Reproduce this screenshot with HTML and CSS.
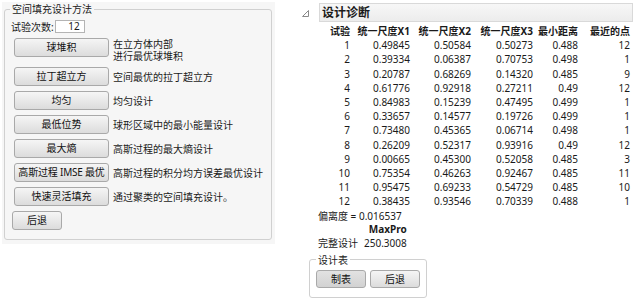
FILE: index.html
```html
<!DOCTYPE html>
<html lang="zh-CN">
<head>
    <meta charset="UTF-8">
    <title>空间填充设计</title>
    <link rel="stylesheet" href="styles.css">
</head>
<body>
    <div class="page">
        <!-- 左侧: 设计方法 -->
        <div class="left-pane">
            <fieldset class="group method-group">
                <legend>空间填充设计方法</legend>
                <div class="runs-row">
                    <span>试验次数:</span>
                    <span class="num-box">12</span>
                </div>
                <div class="method-row tall">
                    <button class="btn method-btn">球堆积</button>
                    <div class="desc">在立方体内部<br>进行最优球堆积</div>
                </div>
                <div class="method-row">
                    <button class="btn method-btn">拉丁超立方</button>
                    <div class="desc">空间最优的拉丁超立方</div>
                </div>
                <div class="method-row">
                    <button class="btn method-btn">均匀</button>
                    <div class="desc">均匀设计</div>
                </div>
                <div class="method-row">
                    <button class="btn method-btn">最低位势</button>
                    <div class="desc">球形区域中的最小能量设计</div>
                </div>
                <div class="method-row">
                    <button class="btn method-btn">最大熵</button>
                    <div class="desc">高斯过程的最大熵设计</div>
                </div>
                <div class="method-row">
                    <button class="btn method-btn tight">高斯过程 IMSE 最优</button>
                    <div class="desc">高斯过程的积分均方误差最优设计</div>
                </div>
                <div class="method-row">
                    <button class="btn method-btn">快速灵活填充</button>
                    <div class="desc">通过聚类的空间填充设计。</div>
                </div>
                <button class="btn back-btn">后退</button>
            </fieldset>
        </div>

        <!-- 右侧: 设计诊断 -->
        <div class="right-pane">
            <div class="outline">
                <svg class="disclosure" width="9" height="9" viewBox="0 0 9 9">
                    <path d="M7.5 1.5 L7.5 7.5 L1.5 7.5 Z" fill="none" stroke="#8a8a8a" stroke-width="1"/>
                </svg>
                <div class="outline-title">设计诊断</div>
            </div>
            <table class="diag">
                <thead>
                    <tr>
                        <th>试验</th>
                        <th>统一尺度X1</th>
                        <th>统一尺度X2</th>
                        <th>统一尺度X3</th>
                        <th>最小距离</th>
                        <th>最近的点</th>
                    </tr>
                </thead>
                <tbody id="diag-rows"></tbody>
            </table>
            <div class="discrepancy">偏离度 = 0.016537</div>
            <table class="maxpro">
                <tr><td></td><th>MaxPro</th></tr>
                <tr><td class="label">完整设计</td><td>250.3008</td></tr>
            </table>
            <fieldset class="group table-group">
                <legend>设计表</legend>
                <button class="btn small-btn pressed">制表</button>
                <button class="btn small-btn">后退</button>
            </fieldset>
        </div>
    </div>

    <script>
        // 诊断数据: 试验, X1, X2, X3, 最小距离, 最近的点
        const rows = [
            [1, '0.49845', '0.50584', '0.50273', '0.488', 12],
            [2, '0.39334', '0.06387', '0.70753', '0.498', 1],
            [3, '0.20787', '0.68269', '0.14320', '0.485', 9],
            [4, '0.61776', '0.92918', '0.27211', '0.49', 12],
            [5, '0.84983', '0.15239', '0.47495', '0.499', 1],
            [6, '0.33657', '0.14577', '0.19726', '0.499', 1],
            [7, '0.73480', '0.45365', '0.06714', '0.498', 1],
            [8, '0.26209', '0.52317', '0.93916', '0.49', 12],
            [9, '0.00665', '0.45300', '0.52058', '0.485', 3],
            [10, '0.75354', '0.46263', '0.92467', '0.485', 11],
            [11, '0.95475', '0.69233', '0.54729', '0.485', 10],
            [12, '0.38435', '0.93546', '0.70339', '0.488', 1]
        ];

        document.getElementById('diag-rows').innerHTML = rows.map(r => `
            <tr>${r.map(v => `<td>${v}</td>`).join('')}</tr>
        `).join('');
    </script>
</body>
</html>
```

FILE: styles.css
```css
body {
    margin: 0;
    background-color: #fff;
    color: #1a1a1a;
    font-family: "Noto Sans", "Noto Sans CJK SC", sans-serif;
    font-size: 10px;
}
.page {
    display: flex;
    align-items: flex-start;
    width: 636px;
    height: 306px;
}

/* left pane */
.left-pane {
    width: 273px;
    height: 242px;
    margin: 2px 0 0 2px;
    background-color: #f6f6f6;
}
.group {
    margin: 0;
    border: 1px solid #d0d0d0;
    border-radius: 3px;
}
.group legend {
    padding: 0 2px;
    line-height: 12px;
    color: #222;
}
.method-group {
    width: 268px;
    height: 237px;
    box-sizing: border-box;
    margin: 1px 0 0 2px;
    padding: 4px 6px 0 6px;
}
.method-group legend {
    margin-left: -1px;
    font-size: 10px;
}
.runs-row {
    display: flex;
    align-items: center;
    gap: 1px;
    height: 13px;
    margin-top: 1px;
}
.num-box {
    width: 30px;
    height: 13px;
    box-sizing: border-box;
    padding-right: 4px;
    border: 1px solid #b4b4b4;
    background-color: #fff;
    text-align: right;
    line-height: 11px;
}
.method-row {
    display: flex;
    align-items: center;
    gap: 4px;
    margin: 5px 0 0 3px;
}
.method-row.tall {
    align-items: flex-start;
    height: 24px;
}
.desc {
    line-height: 12px;
    white-space: nowrap;
}
.btn {
    font-family: inherit;
    font-size: 10px;
    color: #111;
    padding: 0;
    border: 1px solid #a9a9a9;
    border-radius: 3px;
    background: linear-gradient(#f5f5f5, #dcdcdc);
    line-height: 17px;
}
.method-btn {
    width: 95px;
    height: 19px;
    flex: none;
}
.method-btn.tight {
    letter-spacing: -0.2px;
    white-space: nowrap;
}
.back-btn {
    width: 50px;
    height: 19px;
    margin: 5px 0 0 1px;
}

/* right pane */
.right-pane {
    width: 336px;
    margin-left: 25px;
}
.outline {
    display: flex;
    align-items: center;
    height: 19px;
    margin-top: 3px;
}
.disclosure {
    margin: 2px 9px 0 1px;
}
.outline-title {
    width: 314px;
    height: 19px;
    box-sizing: border-box;
    padding-left: 2px;
    border: 1px solid #d9d9d9;
    background: linear-gradient(#f7f7f7, #ececec);
    font-size: 12px;
    font-weight: bold;
    line-height: 17px;
}
.diag {
    border-collapse: collapse;
    margin: 2px 0 0 18px;
}
.diag th,
.diag td {
    padding: 0;
    text-align: right;
    line-height: 14.2px;
    white-space: nowrap;
}
.diag th {
    font-weight: bold;
}
.diag th:nth-child(1) { width: 32px; }
.diag th:nth-child(2) { width: 60px; }
.diag th:nth-child(3) { width: 61px; }
.diag th:nth-child(4) { width: 62px; }
.diag th:nth-child(5) { width: 45px; }
.diag th:nth-child(6) { width: 52px; }
.discrepancy {
    margin: 0 0 0 18px;
    line-height: 14px;
}
.maxpro {
    border-collapse: collapse;
    margin: -1px 0 0 18px;
}
.maxpro th,
.maxpro td {
    padding: 0;
    line-height: 14px;
    text-align: right;
}
.maxpro .label {
    padding-right: 6px;
    text-align: left;
}
.table-group {
    width: 118px;
    box-sizing: border-box;
    margin: 4px 0 0 9px;
    padding: 4px 6px 9px 6px;
    display: flex;
    gap: 4px;
}
.small-btn {
    width: 50px;
    height: 18px;
}
.small-btn.pressed {
    background: linear-gradient(#e2e2e2, #d2d2d2);
}
```
